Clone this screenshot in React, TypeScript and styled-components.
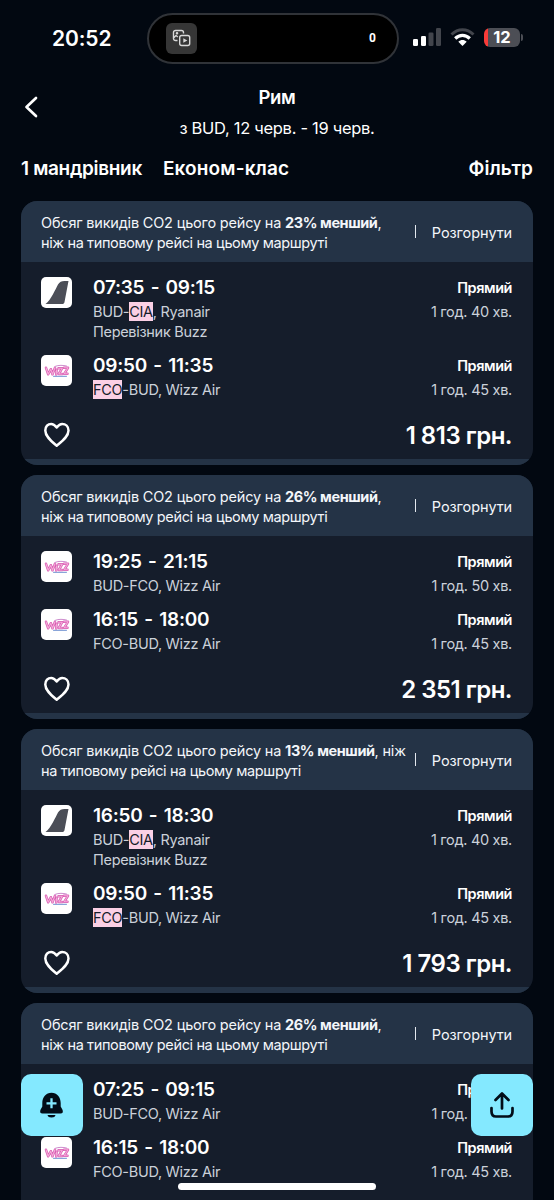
import React from "react";
import styled, { createGlobalStyle } from "styled-components";

const Global = createGlobalStyle`
  * { box-sizing: border-box; }
  body {
    margin: 0;
    height: 1200px;
    overflow: hidden;
    background: #020811;
    color: #fff;
    font-family: Inter, "Noto Sans", sans-serif;
    -webkit-font-smoothing: antialiased;
  }
`;

const Screen = styled.main`
  position: relative;
  width: 554px;
  height: 1200px;
  overflow: hidden;
  background: #020811;
`;

const StatusBar = styled.div`
  display: flex;
  align-items: center;
  height: 50px;
  margin-top: 13px;
`;

const Clock = styled.div`
  width: 147px;
  padding-left: 52px;
  font-size: 21px;
  font-weight: 600;
  letter-spacing: -0.1px;
`;

const Island = styled.div`
  display: flex;
  align-items: center;
  justify-content: space-between;
  width: 252px;
  height: 51px;
  padding: 0 21px 0 17px;
  border: 2px solid #303338;
  border-radius: 26px;
  background: #000;
  font-family: Roboto, sans-serif;
  font-size: 12px;
  font-weight: 700;
`;

const IslandIcon = styled.div`
  display: grid;
  place-items: center;
  width: 31px;
  height: 31px;
  border-radius: 6px;
  background: #363636;
`;

const StatusIcons = styled.div`
  display: flex;
  align-items: center;
  margin: -2px 0 0 14px;
`;

const Signal = styled.svg`
  width: 28px;
  height: 18px;
  margin-right: 9px;
`;

const Wifi = styled.svg`
  width: 25px;
  height: 18px;
  margin-right: 9px;
`;

const Battery = styled.div`
  width: 36px;
  height: 19px;
  border-radius: 6px;
  background: linear-gradient(90deg, #f93b38 4.5px, #4c4e55 4.5px);
  font-size: 16.5px;
  font-weight: 700;
  line-height: 19px;
  text-align: center;
`;

const BatteryCap = styled.div`
  width: 2px;
  height: 7px;
  margin-left: 1px;
  border-radius: 0 2px 2px 0;
  background: #4c4e55;
`;

const Heading = styled.header`
  display: grid;
  grid-template-columns: 61px 1fr 61px;
  height: 85px;
  padding-top: 19px;
`;

const BackButton = styled.div`
  padding: 14px 0 0 23.5px;
  line-height: 0;
`;

const Titles = styled.div`
  text-align: center;
`;

const Title = styled.h1`
  margin: 0;
  font-size: 18.5px;
  font-weight: 600;
  line-height: 30px;
  letter-spacing: -0.4px;
`;

const Subtitle = styled.div`
  font-size: 16.5px;
  line-height: 32px;
  letter-spacing: -0.3px;
`;

const Filters = styled.nav`
  display: flex;
  align-items: center;
  height: 40px;
  margin-bottom: 13px;
  padding: 0 21px;
  font-size: 19px;
  font-weight: 600;
`;

const FilterItem = styled.span<{ $push?: boolean; $tracking: number }>`
  margin-right: ${(p) => (p.$push ? "auto" : "21px")};
  letter-spacing: ${(p) => p.$tracking}px;
  &:last-child { margin-right: 0; }
`;

const List = styled.section`
  display: flex;
  flex-direction: column;
  gap: 10px;
  padding: 0 21px;
`;

const Card = styled.article`
  flex: none;
  border-radius: 16px;
  overflow: hidden;
  background: #151d2b;
`;

const CardEdge = styled.div`
  height: 6px;
  background: #243346;
`;

const Emissions = styled.div`
  display: flex;
  height: 61px;
  padding: 12px 21px 9px 20px;
  background: #243346;
  font-size: 14.5px;
  line-height: 20px;
  color: #f3f6fa;
`;

const EmissionsText = styled.div`
  flex: 1;
  white-space: nowrap;
`;

const EmissionsLine = styled.div<{ $tight?: boolean }>`
  letter-spacing: ${(p) => (p.$tight ? -0.37 : -0.19)}px;
  b { letter-spacing: -0.42px; }
`;

const Expand = styled.div`
  display: flex;
  align-items: center;
  gap: 16px;
  height: 40px;
  letter-spacing: -0.1px;
`;

const Divider = styled.span`
  width: 1px;
  height: 13px;
  margin-top: -3px;
  background: #e3e8ee;
`;

const Body = styled.div`
  display: flex;
  flex-direction: column;
  gap: 10px;
  padding: 12px 21px 0 20px;
`;

const Leg = styled.div`
  display: grid;
  grid-template-columns: 52px 1fr auto;
`;

const Logo = styled.div`
  display: grid;
  place-items: center;
  width: 31px;
  height: 31px;
  margin-top: 3px;
  border-radius: 5px;
  background: #fff;
`;

const Time = styled.div`
  font-size: 19px;
  font-weight: 600;
  line-height: 28px;
  letter-spacing: -0.25px;
  word-spacing: 1.8px;
`;

const Detail = styled.div`
  font-size: 14.5px;
  line-height: 20px;
  color: #cbd1da;
  letter-spacing: -0.3px;
`;

const Mark = styled.mark`
  background: linear-gradient(#fbd0e5, #fbd0e5);
  padding: 1px 0;
  color: #151d2b;
`;

const LegEnd = styled.div`
  text-align: right;
`;

const Direct = styled.div`
  font-size: 14.5px;
  font-weight: 600;
  line-height: 28px;
  letter-spacing: -0.45px;
`;

const Footer = styled.div`
  display: flex;
  align-items: center;
  justify-content: space-between;
  height: 49px;
`;

const Price = styled.div`
  padding-top: 2px;
  font-size: 24px;
  font-weight: 600;
  letter-spacing: -0.5px;
`;

const FloatingButton = styled.button<{ $side: "left" | "right" }>`
  position: absolute;
  top: 1074px;
  ${(p) => p.$side}: 21px;
  display: grid;
  place-items: center;
  width: 62px;
  height: 62px;
  padding: 0;
  border: 0;
  border-radius: 10px;
  background: #84e9ff;
`;

const HomeIndicator = styled.div`
  position: absolute;
  left: 178px;
  top: 1183px;
  width: 198px;
  height: 7px;
  border-radius: 4px;
  background: #fff;
`;

type Airline = "ryanair" | "wizz";

interface Flight {
  airline: Airline;
  time: string;
  from: string;
  to: string;
  changed?: "from" | "to";
  carrier?: string;
  duration: string;
}

interface Offer {
  percent: number;
  breakAfterWord?: boolean;
  flights: Flight[];
  price?: string;
}

const wizz = (time: string, from: string, to: string, duration: string, changed?: "from"): Flight => ({
  airline: "wizz", time, from, to, duration, changed,
});
const ryanair = (time: string): Flight => ({
  airline: "ryanair", time, from: "BUD", to: "CIA", changed: "to", carrier: "Перевізник Buzz", duration: "1 год. 40 хв.",
});

const offers: Offer[] = [
  { percent: 23, price: "1 813 грн.", flights: [ryanair("07:35 - 09:15"), wizz("09:50 - 11:35", "FCO", "BUD", "1 год. 45 хв.", "from")] },
  { percent: 26, price: "2 351 грн.", flights: [wizz("19:25 - 21:15", "BUD", "FCO", "1 год. 50 хв."), wizz("16:15 - 18:00", "FCO", "BUD", "1 год. 45 хв.")] },
  { percent: 13, breakAfterWord: true, price: "1 793 грн.", flights: [ryanair("16:50 - 18:30"), wizz("09:50 - 11:35", "FCO", "BUD", "1 год. 45 хв.", "from")] },
  { percent: 26, flights: [wizz("07:25 - 09:15", "BUD", "FCO", "1 год. 50 хв."), wizz("16:15 - 18:00", "FCO", "BUD", "1 год. 45 хв.")] },
];

const wizzLetters = "M2 3.800L4.200 10.300L6.800 5.200L8.500 10.300L11 3.800M12.600 5.800L12.200 10.500M14.500 4.200H18.200L14.800 10H18.200M20 3.800H24L20.200 9.800H23.500";

const WizzMark = () => (
  <svg width="26" height="14" viewBox="0 0 26 14" fill="none" strokeLinejoin="round" strokeLinecap="round">
    <path d="M9.500 12.300H22.500" stroke="#6c8fd0" strokeWidth="1" />
    <path d={wizzLetters} stroke="#d85fb4" strokeWidth="2.500" />
    <path d={wizzLetters} stroke="#f5a9d8" strokeWidth="1.100" />
    <path d="M11 2.400C15 .8 19 1.200 22.500 2" stroke="#c06fc0" strokeWidth=".8" />
  </svg>
);

const TailMark = () => (
  <svg width="31" height="31" viewBox="0 0 31 31">
    <path d="M4.500 27C10 23 14.500 12 17 7.500C18.500 5 20.500 4 23.500 4H27.500L23.500 25C23.200 26.500 22.500 27 21 27Z" fill="#4b4e57" />
  </svg>
);

const Heart = () => (
  <svg width="31" height="28" viewBox="0 0 31 28" fill="none">
    <path d="M15.700 24.700C10.500 20.300 4.300 15.600 4.300 9.400C4.300 5.300 6.900 2.900 10.200 2.900C12.600 2.900 14.200 4.500 15.700 6.400C17.200 4.500 18.800 2.900 21.200 2.900C24.500 2.900 27.500 5.300 27.500 9.400C27.500 15.600 20.900 20.300 15.700 24.700Z" stroke="#fff" strokeWidth="2.500" strokeLinejoin="round" />
  </svg>
);

const FlightLeg = ({ flight }: { flight: Flight }) => (
  <Leg>
    <Logo>{flight.airline === "wizz" ? <WizzMark /> : <TailMark />}</Logo>
    <div>
      <Time>{flight.time}</Time>
      <Detail>
        {flight.changed === "from" ? <Mark>{flight.from}</Mark> : flight.from}-
        {flight.changed === "to" ? <Mark>{flight.to}</Mark> : flight.to}, {flight.airline === "wizz" ? "Wizz Air" : "Ryanair"}
      </Detail>
      {flight.carrier && <Detail>{flight.carrier}</Detail>}
    </div>
    <LegEnd>
      <Direct>Прямий</Direct>
      <Detail>{flight.duration}</Detail>
    </LegEnd>
  </Leg>
);

const OfferCard = ({ offer }: { offer: Offer }) => (
  <Card>
    <Emissions>
      <EmissionsText>
        <EmissionsLine>
          Обсяг викидів CO2 цього рейсу на <b>{offer.percent}% менший</b>,{offer.breakAfterWord && " ніж"}
        </EmissionsLine>
        <EmissionsLine $tight>
          {!offer.breakAfterWord && "ніж "}на типовому рейсі на цьому маршруті
        </EmissionsLine>
      </EmissionsText>
      <Expand><Divider />Розгорнути</Expand>
    </Emissions>
    <Body>
      {offer.flights.map((flight, i) => <FlightLeg key={i} flight={flight} />)}
      <Footer>
        {offer.price && <><Heart /><Price>{offer.price}</Price></>}
      </Footer>
    </Body>
    <CardEdge />
  </Card>
);

export default function App() {
  return (
    <Screen>
      <Global />
      <StatusBar>
        <Clock>20:52</Clock>
        <Island>
          <IslandIcon>
            <svg width="20" height="20" viewBox="0 0 20 20" fill="none" stroke="#d8d8d8" strokeWidth="1.400" strokeLinejoin="round">
              <path d="M5.500 12.500H3.500a2 2 0 0 1-2-2v-6a2 2 0 0 1 2-2h6a2 2 0 0 1 2 2v1M1.500 10l2.500-2.500 1.800 1.600" />
              <circle cx="5" cy="5.300" r=".6" />
              <rect x="7.700" y="7.500" width="10" height="10" rx="2" />
              <path d="M11.300 10.200v4.600l4-2.300z" fill="#d8d8d8" stroke="none" />
            </svg>
          </IslandIcon>
          <span>0</span>
        </Island>
        <StatusIcons>
          <Signal viewBox="0 0 28 18">
            <rect x="0" y="11" width="5" height="7" rx="1.300" fill="#fff" />
            <rect x="8" y="8" width="5" height="10" rx="1.300" fill="#fff" />
            <rect x="15.500" y="4.500" width="5" height="13.500" rx="1.300" fill="#42454c" />
            <rect x="23" y="0" width="5" height="18" rx="1.300" fill="#42454c" />
          </Signal>
          <Wifi viewBox="0 0 25 18" fill="none">
            <path d="M1.500 6.500C8 .2 17 .2 23.500 6.500" stroke="#42454c" strokeWidth="3" />
            <path d="M5.200 10.500C9.500 6.400 15.500 6.400 19.800 10.500" stroke="#fff" strokeWidth="3.200" />
            <path d="M8.300 13.800C10.800 11.400 14.200 11.400 16.700 13.800L12.500 18Z" fill="#fff" />
          </Wifi>
          <Battery>12</Battery>
          <BatteryCap />
        </StatusIcons>
      </StatusBar>
      <Heading>
        <BackButton>
          <svg width="16" height="22" viewBox="0 0 16 22" fill="none" stroke="#fff" strokeWidth="2.700" strokeLinecap="round" strokeLinejoin="round">
            <path d="M12 2L2.500 11L12 20" />
          </svg>
        </BackButton>
        <Titles>
          <Title>Рим</Title>
          <Subtitle>з BUD, 12 черв. - 19 черв.</Subtitle>
        </Titles>
      </Heading>
      <Filters>
        <FilterItem $tracking={-0.32}>1 мандрівник</FilterItem>
        <FilterItem $push $tracking={0.15}>Економ-клас</FilterItem>
        <FilterItem $tracking={0.05}>Фільтр</FilterItem>
      </Filters>
      <List>
        {offers.map((offer, i) => <OfferCard key={i} offer={offer} />)}
      </List>
      <FloatingButton $side="left" aria-label="Сповіщення">
        <svg width="26" height="28" viewBox="0 0 26 28">
          <path d="M3.300 12C3.300 6 7 1.700 12.500 1.700S21.700 6 21.700 12V15.500L23.600 19Q24.600 22.500 21.500 22.500H3.500Q.4 22.500 1.400 19L3.300 15.500Z" fill="#020d18" />
          <path d="M8.500 24H16.500Q16 26.500 12.500 26.500T8.500 24Z" fill="#020d18" />
          <path d="M12.500 7.300V17.300M7.500 12.300H17.500" stroke="#84e9ff" strokeWidth="2.300" />
        </svg>
      </FloatingButton>
      <FloatingButton $side="right" aria-label="Поділитися">
        <svg width="26" height="28" viewBox="0 0 26 28" fill="none" stroke="#020d18" strokeWidth="2.700" strokeLinecap="round" strokeLinejoin="round">
          <path d="M13 17.500V2.500M6.500 9L13 2.500L19.500 9M2.500 17V20.500Q2.500 25.500 7 25.500H19Q23.500 25.500 23.500 20.500V17" />
        </svg>
      </FloatingButton>
      <HomeIndicator />
    </Screen>
  );
}
